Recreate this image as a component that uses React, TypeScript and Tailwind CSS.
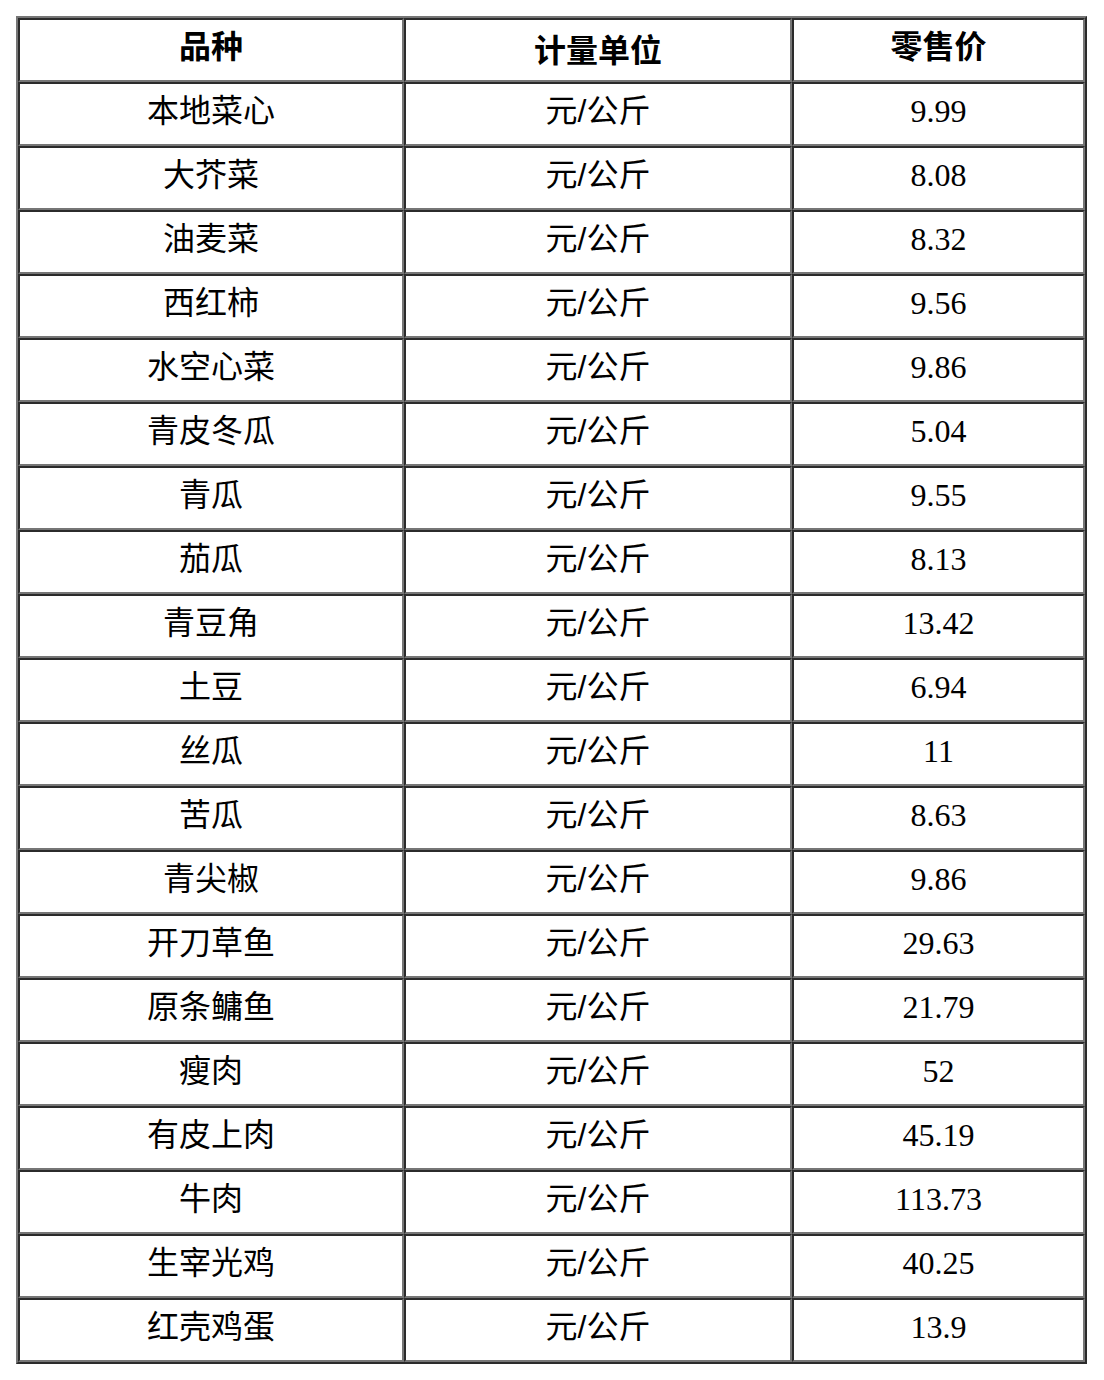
const ROWS: [string, string][] = [
  ["本地菜心", "9.99"],
  ["大芥菜", "8.08"],
  ["油麦菜", "8.32"],
  ["西红柿", "9.56"],
  ["水空心菜", "9.86"],
  ["青皮冬瓜", "5.04"],
  ["青瓜", "9.55"],
  ["茄瓜", "8.13"],
  ["青豆角", "13.42"],
  ["土豆", "6.94"],
  ["丝瓜", "11"],
  ["苦瓜", "8.63"],
  ["青尖椒", "9.86"],
  ["开刀草鱼", "29.63"],
  ["原条鳙鱼", "21.79"],
  ["瘦肉", "52"],
  ["有皮上肉", "45.19"],
  ["牛肉", "113.73"],
  ["生宰光鸡", "40.25"],
  ["红壳鸡蛋", "13.9"],
];

// inset cell border: dark on top/left, grey on bottom/right
const cell =
  "h-[64px] border-2 border-t-[#2b2b2b] border-l-[#2b2b2b] border-b-[#767676] border-r-[#767676] px-0 text-center align-middle text-[32px] leading-none text-black";
const sans = "font-['Liberation_Sans','Noto_Sans_CJK_SC',sans-serif]";
const serif = "font-['Liberation_Serif','Noto_Sans_CJK_SC',serif]";

export default function App() {
  return (
    <div className="bg-white p-4">
      <table className="w-[1071px] table-fixed border-separate border-spacing-0 border-2 border-t-[#767676] border-l-[#767676] border-b-[#2b2b2b] border-r-[#2b2b2b]">
        <colgroup>
          <col className="w-[386px]" />
          <col className="w-[388px]" />
          <col className="w-[293px]" />
        </colgroup>
        <thead>
          <tr>
            <th className={`${cell} ${sans} pt-0 pb-[6px] font-bold`}>品种</th>
            <th className={`${cell} ${sans} pt-[2px] pb-0 font-bold`}>计量单位</th>
            <th className={`${cell} ${sans} pt-0 pb-[6px] font-bold`}>零售价</th>
          </tr>
        </thead>
        <tbody>
          {ROWS.map(([name, price]) => (
            <tr key={name}>
              <td className={`${cell} ${sans} pt-0 pb-[7px]`}>{name}</td>
              <td className={`${cell} ${sans} pt-0 pb-[7px]`}>元/公斤</td>
              <td className={`${cell} ${serif} pt-0 pb-[7px]`}>{price}</td>
            </tr>
          ))}
        </tbody>
      </table>
    </div>
  );
}
